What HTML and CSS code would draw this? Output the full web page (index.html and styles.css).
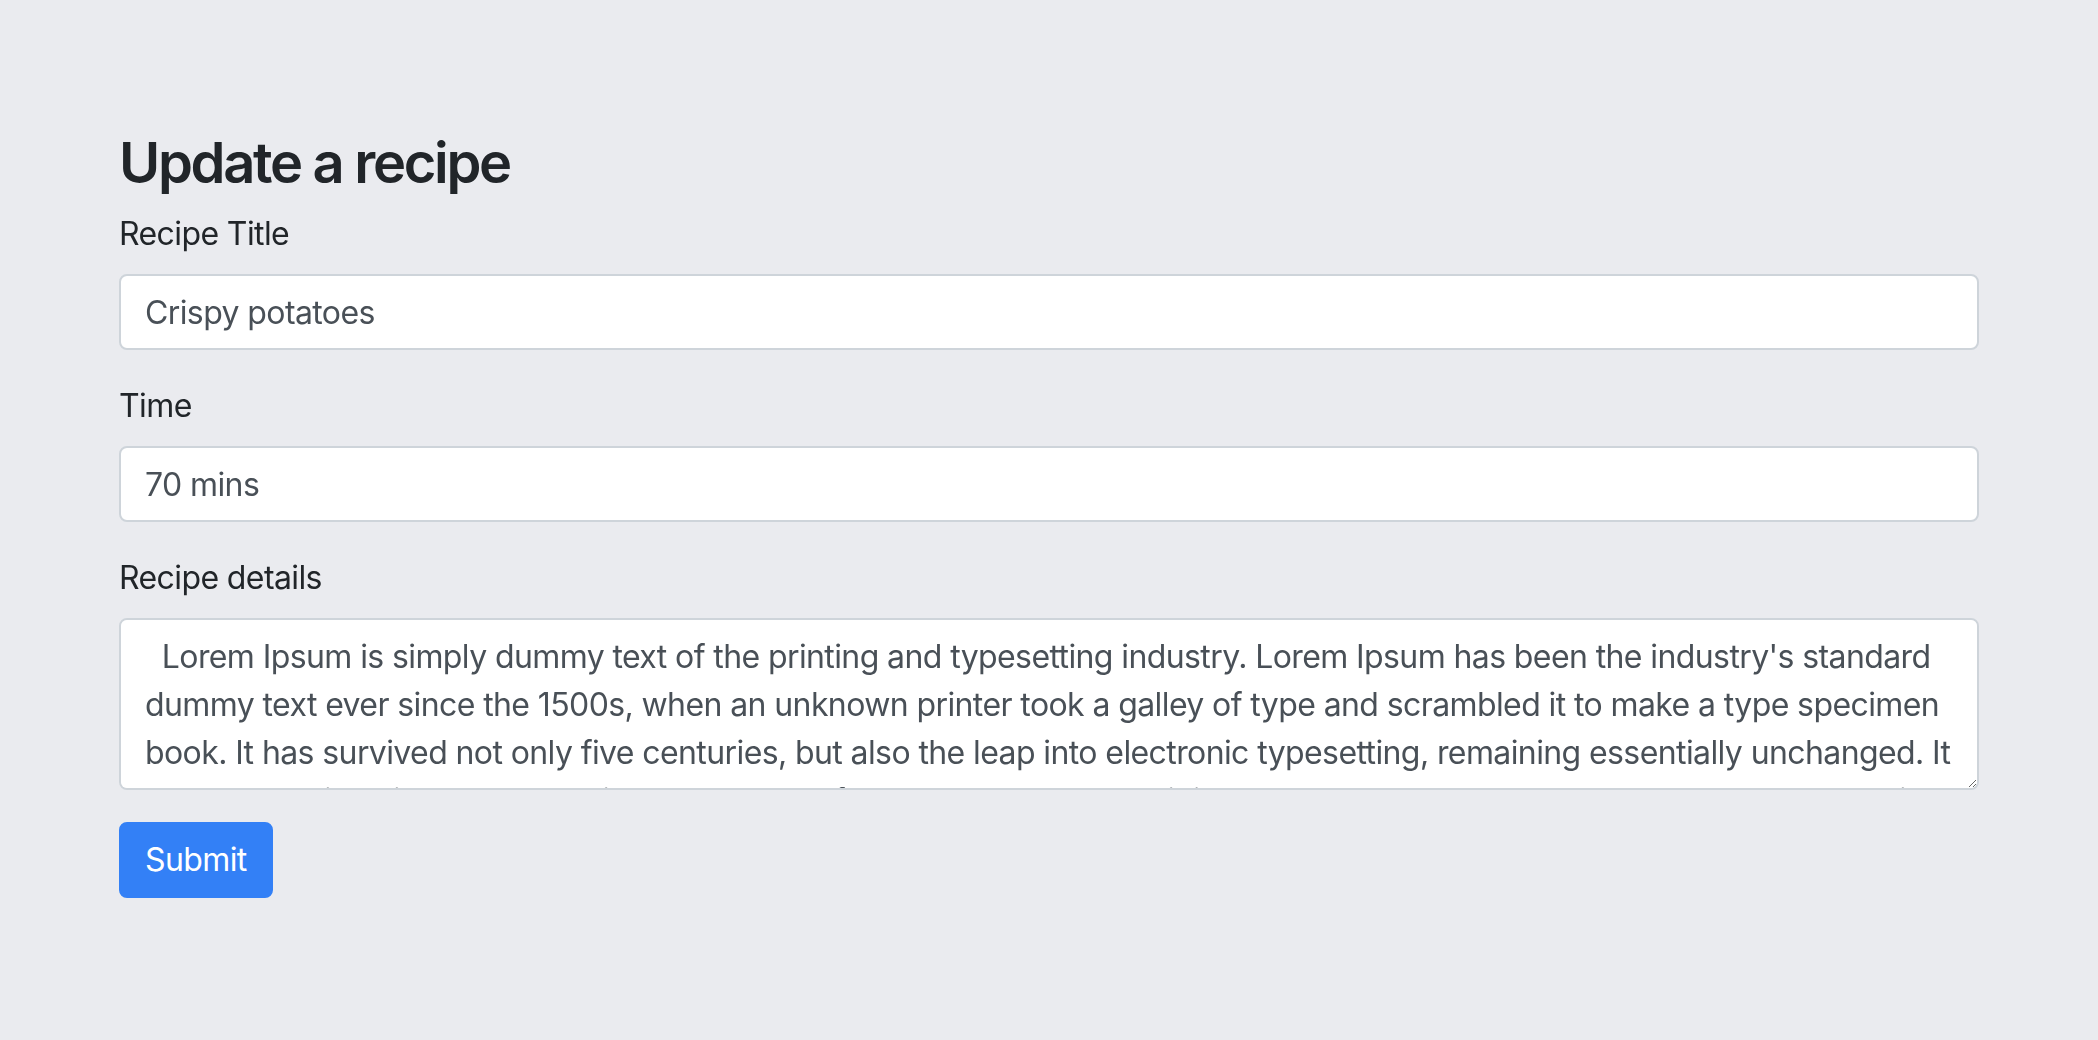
FILE: index.html
```html
<!DOCTYPE html>
<html lang="en">
<head>
<meta charset="utf-8">
<title>Update a recipe</title>
<link rel="stylesheet" href="styles.css">
</head>
<body>
<main class="container">
  <h3 class="title">Update a recipe</h3>
  <form class="form">
    <div class="form-group">
      <label class="label" for="title">Recipe Title</label>
      <input class="control" id="title" type="text" value="Crispy potatoes">
    </div>
    <div class="form-group">
      <label class="label" for="time">Time</label>
      <input class="control" id="time" type="text" value="70 mins">
    </div>
    <div class="form-group">
      <label class="label" for="details">Recipe details</label>
      <textarea class="control textarea" id="details" rows="3">  Lorem Ipsum is simply dummy text of the printing and typesetting industry. Lorem Ipsum has been the industry's standard dummy text ever since the 1500s, when an unknown printer took a galley of type and scrambled it to make a type specimen book. It has survived not only five centuries, but also the leap into electronic typesetting, remaining essentially unchanged. It was popularised in the 1960s with the release of Letraset sheets containing Lorem Ipsum passages, and more recently with desktop publishing software like Aldus PageMaker including versions of Lorem Ipsum.</textarea>
    </div>
    <button class="btn" type="button">Submit</button>
  </form>
</main>
</body>
</html>
```

FILE: styles.css
```css
html, body {
  margin: 0;
  padding: 0;
}

body {
  background: #eaebef;
  color: #212529;
  font-family: Inter, "Noto Sans", "Liberation Sans", sans-serif;
  font-size: 32px;
  line-height: 1.5;
  letter-spacing: -0.6px;
  min-height: 1040px;
}

.container {
  width: 1860px;
  margin: 0 auto;
  padding-top: 130px;
  box-sizing: border-box;
}

.title {
  margin: 0 0 13px 0;
  font-size: 56px;
  font-weight: 600;
  line-height: 1.2;
  letter-spacing: -2.3px;
  color: #212529;
}

.form {
  margin: 0;
}

.form-group {
  margin-bottom: 32px;
}

.label {
  display: inline-block;
  margin-bottom: 16px;
  font-size: 32px;
  line-height: 48px;
  color: #212529;
}

.control {
  display: block;
  width: 100%;
  box-sizing: border-box;
  height: 76px;
  padding: 12px 24px;
  font-family: inherit;
  font-size: 32px;
  line-height: 48px;
  letter-spacing: -0.6px;
  color: #495057;
  background: #ffffff;
  border: 2px solid #ced4da;
  border-radius: 8px;
  outline: none;
  margin: 0;
}

.textarea {
  height: 172px;
  padding-top: 13px;
  padding-bottom: 11px;
  resize: vertical;
  overflow: auto;
}

.btn {
  display: inline-block;
  height: 76px;
  padding: 12px 24px;
  font-family: inherit;
  font-size: 32px;
  line-height: 48px;
  letter-spacing: -0.6px;
  color: #ffffff;
  background: #3380f6;
  border: 2px solid #3380f6;
  border-radius: 8px;
  cursor: pointer;
}
```
